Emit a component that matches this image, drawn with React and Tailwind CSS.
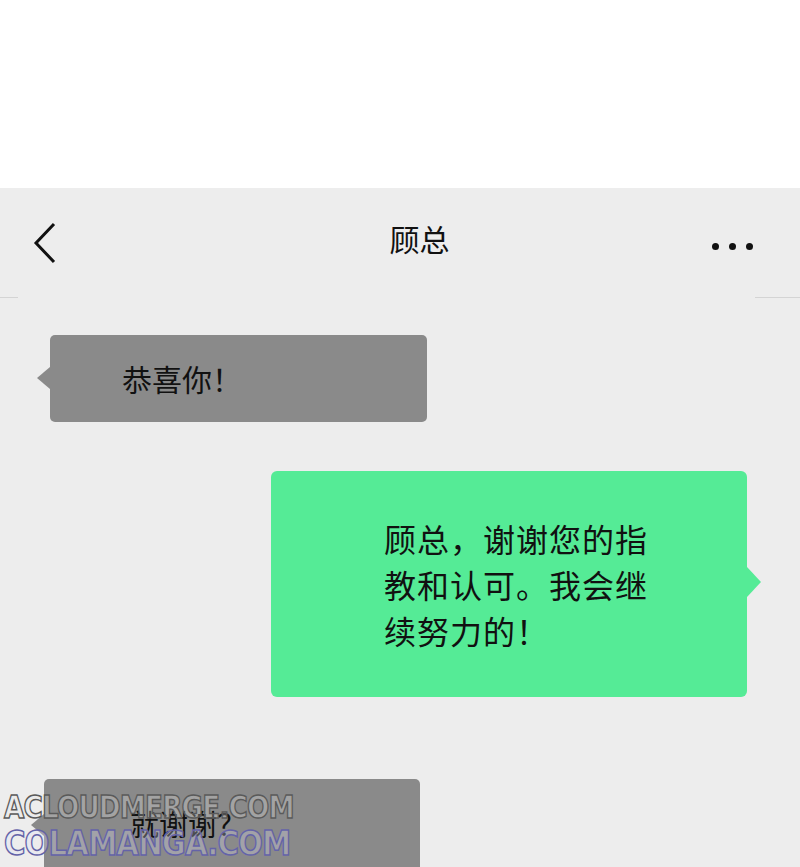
import React from 'react';

// Chat screen: WeChat-style conversation with 顾总
const font = "font-['Noto_Sans_CJK_SC','Noto_Sans',sans-serif]";

function BackIcon() {
  return (
    <svg width="24" height="42" viewBox="0 0 24 42" fill="none">
      <path d="M21 2 L3 21 L21 40" stroke="#111" strokeWidth="3" strokeLinejoin="miter" />
    </svg>
  );
}

function Header() {
  return (
    <div className="relative h-[110px] flex items-center justify-between pl-[33px] pr-[47px]">
      <BackIcon />
      <h1 className="text-[30px] leading-none text-[#111] pl-[70px] -mt-[10px]">顾总</h1>
      <div className="flex gap-[10px] mt-[6px]">
        <span className="w-[7px] h-[7px] rounded-full bg-[#111]" />
        <span className="w-[7px] h-[7px] rounded-full bg-[#111]" />
        <span className="w-[7px] h-[7px] rounded-full bg-[#111]" />
      </div>
      {/* divider only visible at the edges */}
      <div className="absolute left-0 bottom-0 w-[18px] h-px bg-[#d4d4d4]" />
      <div className="absolute right-0 bottom-0 w-[45px] h-px bg-[#d4d4d4]" />
    </div>
  );
}

function Watermark() {
  return (
    <div className="absolute left-[4px] bottom-[7px] flex flex-col font-['DejaVu_Sans',sans-serif] font-bold leading-none pointer-events-none">
      <span className="text-[32px] tracking-[-1px] text-[rgba(230,230,230,0.3)] [-webkit-text-stroke:1.5px_#5a5a5a] origin-left scale-x-[0.82] inline-block">
        ACLOUDMERGE.COM
      </span>
      <span className="mt-[3px] text-[34px] tracking-[-1px] text-[rgba(225,225,245,0.3)] [-webkit-text-stroke:1.5px_#6463a8] origin-left scale-x-[0.86] inline-block">
        COLAMANGA.COM
      </span>
    </div>
  );
}

export default function App() {
  return (
    <div className={`${font} w-[800px] h-[867px] overflow-hidden bg-white relative`}>
      <div className="h-[188px] bg-white" />
      <div className="bg-[#ededed] h-[679px]">
        <Header />

        <div className="flex flex-col pt-[37px]">
          {/* incoming */}
          <div className="relative ml-[50px] w-[377px] h-[87px] bg-[#8a8a8a] rounded-[5px] flex items-center pl-[72px]">
            <span className="absolute -left-[13px] top-[32px] w-0 h-0 border-y-[11px] border-y-transparent border-r-[13px] border-r-[#8a8a8a]" />
            <p className="text-[30px] leading-none text-[#111] -mt-[2px]">恭喜你！</p>
          </div>

          {/* outgoing */}
          <div className="relative mt-[49px] ml-[271px] w-[476px] h-[226px] bg-[#55eb96] rounded-[6px] pl-[113px] pt-[44px]">
            <span className="absolute -right-[14px] top-[96px] w-0 h-0 border-y-[15px] border-y-transparent border-l-[14px] border-l-[#55eb96]" />
            <p className="w-[280px] text-[32px] leading-[46px] tracking-[1px] text-[#111]">
              顾总，谢谢您的指教和认可。我会继续努力的！
            </p>
          </div>

          {/* incoming */}
          <div className="relative mt-[82px] ml-[44px] w-[376px] h-[100px] bg-[#8a8a8a] rounded-[5px] pl-[86px] pt-[30px]">
            <span className="absolute -left-[13px] top-[35px] w-0 h-0 border-y-[11px] border-y-transparent border-r-[13px] border-r-[#8a8a8a]" />
            <p className="text-[29px] leading-none text-[#111]">就谢谢？</p>
          </div>
        </div>
      </div>
      <Watermark />
    </div>
  );
}
